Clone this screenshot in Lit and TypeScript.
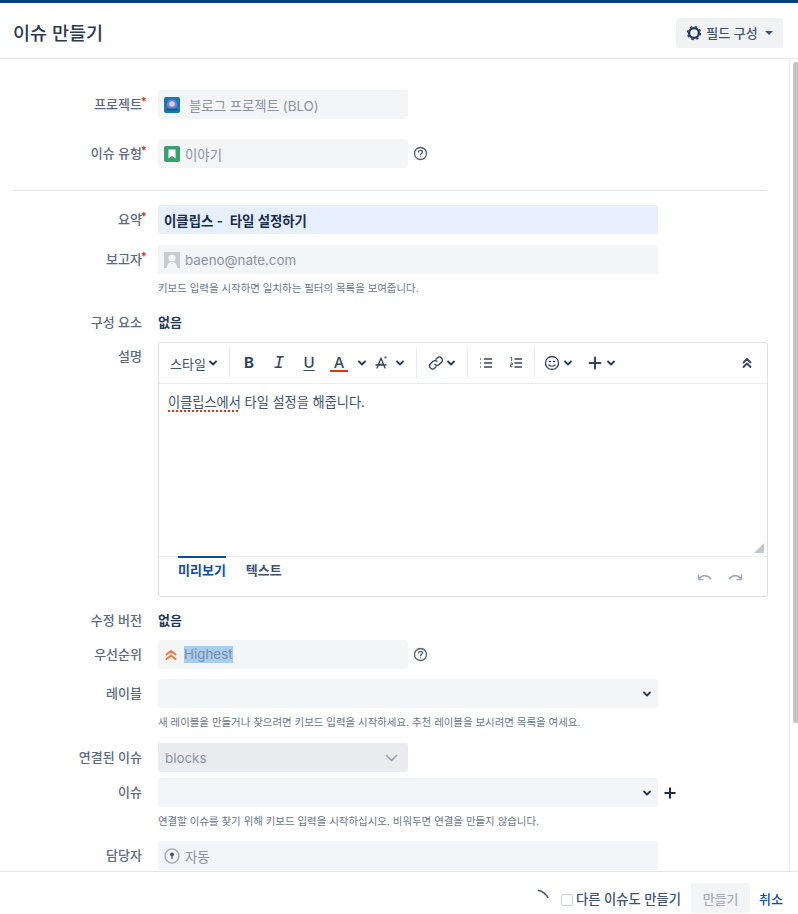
import { LitElement, html, css, svg } from 'lit';
import { customElement } from 'lit/decorators.js';

const chevron = (color = '#253858') => html`<svg class="chev" width="10" height="10" viewBox="0 0 10 10" fill="none" stroke=${color} stroke-width="1.8" stroke-linecap="round" stroke-linejoin="round"><path d="M2 3.5 5 6.5 8 3.5" /></svg>`;

const help = html`<svg class="help" width="15" height="15" viewBox="0 0 16 16" fill="none" stroke="#505f79" stroke-width="1.4"><circle cx="8" cy="8" r="6.4" /><path d="M5.9 6.4C6 5.2 6.9 4.7 8 4.7c1.2 0 2.1.7 2.1 1.7 0 1.5-2.1 1.5-2.1 3" stroke-linecap="round" /><circle cx="8" cy="11.4" r=".6" fill="#505f79" stroke="none" /></svg>`;

const tb = (body: unknown) => html`<svg width="18" height="18" viewBox="0 0 18 18" fill="none" stroke="#344563" stroke-width="1.6" stroke-linecap="round" stroke-linejoin="round">${body}</svg>`;

// horizontal gap in the toolbar
const sp = (name: string) => html`<span class=${name}></span>`;

@customElement('app-root')
export class AppRoot extends LitElement {
  static styles = css`
    :host {
      display: block;
      width: 798px;
      height: 914px;
      overflow: hidden;
      position: relative;
      background: #fff;
      font-family: Inter, 'Noto Sans CJK KR', sans-serif;
      font-size: 13px;
      color: #172b4d;
    }

    .topline { height: 3px; background: #0a3f7f; }

    .head {
      height: 56px;
      box-sizing: border-box;
      border-bottom: 1px solid #e6e8ec;
      display: flex;
      align-items: center;
      justify-content: space-between;
      padding: 4px 15px 0 13px;
    }
    .head h1 { margin: 0; font-size: 18.5px; font-weight: 500; color: #2c3a50; line-height: 24px; }

    .cfg {
      height: 30px;
      width: 107px;
      box-sizing: border-box;
      background: #f1f2f4;
      border-radius: 3px;
      display: flex;
      align-items: center;
      justify-content: center;
      gap: 4px;
      color: #42526e;
      font-size: 13px;
      font-weight: 500;
    }
    .caret { width: 0; height: 0; border: 4px solid transparent; border-top: 4px solid #42526e; border-bottom: 0; margin-left: 3px; }

    .scroll {
      height: 813px;
      overflow: hidden;
      display: flex;
    }
    .form { width: 789px; padding-top: 31px; box-sizing: border-box; }
    .bar { width: 9px; border-left: 1px solid #eceef0; box-sizing: border-box; padding: 3px 0 0 3px; }
    .thumb { width: 6px; height: 661px; background: #c4c4c4; border-radius: 3px 0 0 3px; }

    .row { display: grid; grid-template-columns: 147px 1fr; column-gap: 11px; align-items: start; }
    .project { margin-bottom: 20px; }
    .type { margin-bottom: 22px; }
    .summary { margin-top: 14px; margin-bottom: 11px; }
    .component { margin-top: 12px; }
    .desc { margin-top: 5px; }
    .version { margin-top: 9px; }
    .priority { margin-top: 5px; }
    .labels { margin-top: 10px; }
    .linked { margin-top: 13px; }
    .issue { margin-top: 6px; }
    .assignee { margin-top: 12px; }

    .lab {
      text-align: right;
      color: #5a6880;
      font-weight: 500;
      font-size: 13px;
      line-height: 29px;
      white-space: nowrap;
      padding-right: 5px;
      position: relative;
    }
    .lab i { color: #de350b; font-style: normal; font-weight: 700; font-size: 11px; position: absolute; right: 0; top: -3px; }

    .ctrl { display: flex; align-items: center; gap: 5px; }
    .field {
      height: 29px;
      box-sizing: border-box;
      background: #f4f5f7;
      border-radius: 3px;
      display: flex;
      align-items: center;
      padding: 0 6px;
      color: #8993a4;
      font-size: 13.4px;
      gap: 5px;
    }
    .w250 { width: 250px; }
    .w500 { width: 500px; justify-content: space-between; }
    .left { justify-content: flex-start; }
    .active { background: #e6f0fc; color: #172b4d; font-weight: 600; }
    .dark { background: #ebecf0; justify-content: space-between; padding: 0 10px 0 7px; }
    .projicon { margin-right: 4px; }
    .prio { gap: 6px; }
    .sel { background: #a8cdf5; color: #7d8ca3; line-height: 17px; }

    .hint { font-size: 10.45px; color: #6b778c; margin: 8px 0 0; line-height: 14px; white-space: nowrap; }
    .plain { font-weight: 600; font-size: 13px; line-height: 29px; color: #253858; }

    hr { border: 0; height: 1px; background: #e4e6ea; margin: 0 22px 0 13px; }

    .editor {
      width: 610px;
      height: 255px;
      box-sizing: border-box;
      border: 1px solid #dfe1e6;
      border-radius: 3px;
      display: flex;
      flex-direction: column;
    }
    .tools {
      height: 41px;
      flex: none;
      box-sizing: border-box;
      border-bottom: 1px solid #ebecf0;
      display: flex;
      align-items: center;
      padding-left: 11px;
      color: #42526e;
    }
    .sep { width: 1px; height: 30px; background: #ebecf0; flex: none; }
    .txt { font-size: 13px; color: #42526e; width: 38px; white-space: nowrap; }
    .fmt { font-size: 15px; font-weight: 700; width: 18px; text-align: center; color: #344563; line-height: 18px; }
    .fi { font-family: 'Liberation Mono', monospace; font-style: italic; font-size: 18px; font-weight: 400; }
    .fu { font-weight: 500; text-decoration: underline; text-underline-offset: 2px; }
    .fa { font-weight: 500; border-bottom: 2px solid #de350b; line-height: 15px; }
    .s1 { width: 1px; flex: none; }
    .s2 { width: 2px; flex: none; }
    .s5 { width: 5px; flex: none; }
    .s8 { width: 8px; flex: none; }
    .s9 { width: 9px; flex: none; }
    .s10 { width: 10px; flex: none; }
    .s11 { width: 11px; flex: none; }
    .s12 { width: 12px; flex: none; }
    .s13 { width: 13px; flex: none; }
    .grow { flex: 1; }
    .content {
      flex: 1;
      position: relative;
      padding: 8px 9px;
      font-size: 13.2px;
      line-height: 20px;
      color: #42526e;
    }
    .spell { text-decoration: underline dotted #de350b 1.5px; text-underline-offset: 3px; }
    .grip { position: absolute; right: 3px; bottom: 3px; }
    .tabs {
      height: 40px;
      flex: none;
      box-sizing: border-box;
      border-top: 1px solid #ebecf0;
      display: flex;
      align-items: flex-start;
      padding-left: 19px;
      position: relative;
      font-size: 13px;
      font-weight: 600;
    }
    .tab { padding: 3px 0 0; margin-right: 20px; color: #42526e; line-height: 18px; margin-top: -1px; border-top: 2px solid transparent; }
    .tab.on { color: #0a4ea2; border-top-color: #0a4ea2; }
    .undo { position: absolute; right: 24px; top: 15px; display: flex; gap: 14px; }

    .foot {
      position: absolute;
      left: 0;
      right: 0;
      bottom: 0;
      height: 43px;
      box-sizing: border-box;
      background: #fff;
      border-top: 1px solid #e4e6ea;
      display: flex;
      align-items: center;
      justify-content: flex-end;
      padding: 10px 15px 0 0;
      font-size: 13px;
      font-weight: 500;
      color: #42526e;
    }
    .spin { margin-bottom: 5px; }
    .check { width: 10px; height: 10px; border: 1px solid #c9ced6; border-radius: 2px; margin: 3px 3px 0 12px; }
    .again { font-size: 13.3px; }
    .create { width: 59px; height: 30px; background: #f4f5f7; color: #a5adba; border-radius: 3px; display: flex; align-items: center; justify-content: center; margin: 0 9px 0 10px; }
    .cancel { color: #0a4ea2; }
  `;

  render() {
    return html`
      <div class="topline"></div>
      <div class="head">
        <h1>이슈 만들기</h1>
        <div class="cfg">
          <svg width="16" height="16" viewBox="0 0 16 16" fill="none" stroke="#253858"><circle cx="8" cy="8" r="4.900" stroke-width="2.300" /><circle cx="8" cy="8" r="6.500" stroke-width="1.300" stroke-dasharray="2.550 2.550" /></svg>
          필드 구성<span class="caret"></span>
        </div>
      </div>

      <div class="scroll">
        <div class="form">
          <div class="row project">
            <div class="lab">프로젝트<i>*</i></div>
            <div class="ctrl"><div class="field w250 left">
              <svg class="projicon" width="16" height="16" viewBox="0 0 16 16"><rect width="16" height="16" rx="2" fill="#1479b8" /><circle cx="8" cy="7.500" r="5.200" fill="#7f78c8" /><circle cx="8" cy="7" r="2.800" fill="#d6d3f2" /><rect x="2.500" y="11.500" width="11" height="2" fill="#0d5f94" /></svg>
              블로그 프로젝트 (BLO)
            </div></div>
          </div>
          <div class="row type">
            <div class="lab">이슈 유형<i>*</i></div>
            <div class="ctrl"><div class="field w250 left">
              <svg width="16" height="16" viewBox="0 0 16 16"><rect width="16" height="16" rx="2" fill="#36a269" /><path d="M4.500 3.500h7v9L8 10l-3.500 2.500z" fill="#fff" /></svg>
              이야기
            </div>${help}</div>
          </div>

          <hr />

          <div class="row summary">
            <div class="lab">요약<i>*</i></div>
            <div class="ctrl"><div class="field w500 left active">이클립스 -&nbsp; 타일 설정하기</div></div>
          </div>
          <div class="row">
            <div class="lab">보고자<i>*</i></div>
            <div>
              <div class="field w500 left">
                <svg width="16" height="16" viewBox="0 0 16 16"><rect width="16" height="16" fill="#c9ccd1" /><circle cx="8" cy="6" r="3.500" fill="#f4f5f7" /><path d="M3 16c0-4 2-6 5-6s5 2 5 6z" fill="#f4f5f7" /></svg>
                baeno@nate.com
              </div>
              <p class="hint">키보드 입력을 시작하면 일치하는 필터의 목록을 보여줍니다.</p>
            </div>
          </div>

          <div class="row component">
            <div class="lab">구성 요소</div>
            <div class="plain">없음</div>
          </div>

          <div class="row desc">
            <div class="lab">설명</div>
            <div class="editor">
              <div class="tools">
                <span class="txt">스타일</span>${chevron()}
                ${sp('s11')}<span class="sep"></span>${sp('s10')}
                <span class="fmt">B</span>${sp('s12')}
                <span class="fmt fi">I</span>${sp('s12')}
                <span class="fmt fu">U</span>${sp('s12')}
                <span class="fmt fa">A</span>${sp('s9')}
                ${chevron()}${sp('s5')}
                ${tb(svg`<path d="M5 14 9 4l4 10M6.500 10.500h5M4 11h10" stroke-width="1.300" /><circle cx="13.500" cy="3.500" r="1.300" fill="#7a869a" stroke="none" />`)}${sp('s5')}${chevron()}
                ${sp('s11')}<span class="sep"></span>${sp('s10')}
                ${tb(svg`<path d="M8 10.500a3 3 0 0 0 4.300 0l2.200-2.200a3 3 0 0 0-4.300-4.300L9 5.200M10 7.500a3 3 0 0 0-4.300 0L3.500 9.700a3 3 0 0 0 4.300 4.300L9 12.800" stroke-width="1.300" />`)}${sp('s1')}${chevron()}
                ${sp('s11')}<span class="sep"></span>${sp('s9')}
                ${tb(svg`<path d="M7 5h8M7 9h8M7 13h8M3 5h.8M3 9h.8M3 13h.8" stroke-width="1.500" stroke-linecap="butt" />`)}
                ${sp('s12')}
                ${tb(svg`<path d="M7.500 5h7.500M7.500 9h7.500M7.500 13h7.500" stroke-width="1.500" stroke-linecap="butt" /><path d="M3.500 3.500h1.200v3.500M3.500 9h1.800v1.800H3.500v1.800h1.800" stroke-width=".9" stroke-linecap="butt" />`)}
                ${sp('s9')}<span class="sep"></span>${sp('s8')}
                ${tb(svg`<circle cx="9" cy="9" r="6.500" stroke-width="1.300" /><path d="M6 11c1.600 1.500 4.400 1.500 6 0M6.500 7.500h1M10.500 7.500h1" stroke-width="1.300" />`)}${sp('s2')}${chevron()}
                ${sp('s13')}
                ${tb(svg`<path d="M9 3.500v11M3.500 9h11" stroke-width="2" />`)}${sp('s2')}${chevron()}
                <span class="grow"></span>
                ${tb(svg`<path d="M5.500 8.500 9 5l3.500 3.500M5.500 13 9 9.500l3.500 3.500" stroke-width="1.800" />`)}
                ${sp('s11')}
              </div>
              <div class="content">
                <span class="spell">이클립스에서</span> 타일 설정을 해줍니다.
                <svg class="grip" width="10" height="10" viewBox="0 0 10 10"><path d="M10 0v10H0z" fill="#c1c7d0" /></svg>
              </div>
              <div class="tabs">
                <div class="tab on">미리보기</div>
                <div class="tab">텍스트</div>
                <div class="undo">
                  <svg width="16" height="10" viewBox="0 0 16 10" fill="none" stroke="#a5adba" stroke-width="1.600"><path d="M2 7c3-4.500 8-4.500 12 0" /><path d="M1.500 2.500V7.500h5" stroke-width="1.400" /></svg>
                  <svg width="16" height="10" viewBox="0 0 16 10" fill="none" stroke="#a5adba" stroke-width="1.600"><path d="M14 7c-3-4.500-8-4.500-12 0" /><path d="M14.500 2.500V7.500h-5" stroke-width="1.400" /></svg>
                </div>
              </div>
            </div>
          </div>

          <div class="row version">
            <div class="lab">수정 버전</div>
            <div class="plain">없음</div>
          </div>
          <div class="row priority">
            <div class="lab">우선순위</div>
            <div class="ctrl"><div class="field w250 left prio">
              <svg width="14" height="12" viewBox="0 0 14 12" fill="none" stroke="#ee7a3c" stroke-width="2" stroke-linecap="round" stroke-linejoin="round"><path d="M2.500 5.500 7 2l4.500 3.500M2.500 10 7 6.500l4.500 3.500" /></svg>
              <span class="sel">Highest</span>
            </div>${help}</div>
          </div>
          <div class="row labels">
            <div class="lab">레이블</div>
            <div>
              <div class="field w500">&nbsp;${chevron()}</div>
              <p class="hint">새 레이블을 만들거나 찾으려면 키보드 입력을 시작하세요. 추천 레이블을 보시려면 목록을 여세요.</p>
            </div>
          </div>
          <div class="row linked">
            <div class="lab">연결된 이슈</div>
            <div class="field w250 dark">blocks
              <svg width="13" height="8" viewBox="0 0 13 8" fill="none" stroke="#97a0af" stroke-width="1.500" stroke-linecap="round" stroke-linejoin="round"><path d="M1.500 1.500 6.500 6.500 11.500 1.500" /></svg>
            </div>
          </div>
          <div class="row issue">
            <div class="lab">이슈</div>
            <div>
              <div class="ctrl"><div class="field w500">&nbsp;${chevron()}</div>
                <svg width="14" height="14" viewBox="0 0 14 14" fill="none" stroke="#172b4d" stroke-width="2"><path d="M7 1.500v11M1.500 7h11" /></svg>
              </div>
              <p class="hint">연결할 이슈를 찾기 위해 키보드 입력을 시작하십시오. 비워두면 연결을 만들지 않습니다.</p>
            </div>
          </div>
          <div class="row assignee">
            <div class="lab">담당자</div>
            <div class="field w500 left">
              <svg width="16" height="16" viewBox="0 0 16 16"><circle cx="8" cy="8" r="7" fill="#f4f5f7" stroke="#a5adba" stroke-width="1.500" /><circle cx="8" cy="6.500" r="2" fill="#42526e" /><path d="M8 7v4" stroke="#42526e" stroke-width="1.200" /></svg>
              자동
            </div>
          </div>
        </div>
        <div class="bar"><div class="thumb"></div></div>
      </div>

      <div class="foot">
        <svg class="spin" width="14" height="14" viewBox="0 0 14 14" fill="none" stroke="#42526e" stroke-width="1.500"><path d="M3 1.500C6.500 1.500 11 4.500 13 9" /></svg>
        <span class="check"></span><span class="again">다른 이슈도 만들기</span>
        <div class="create">만들기</div>
        <span class="cancel">취소</span>
      </div>
    `;
  }
}
